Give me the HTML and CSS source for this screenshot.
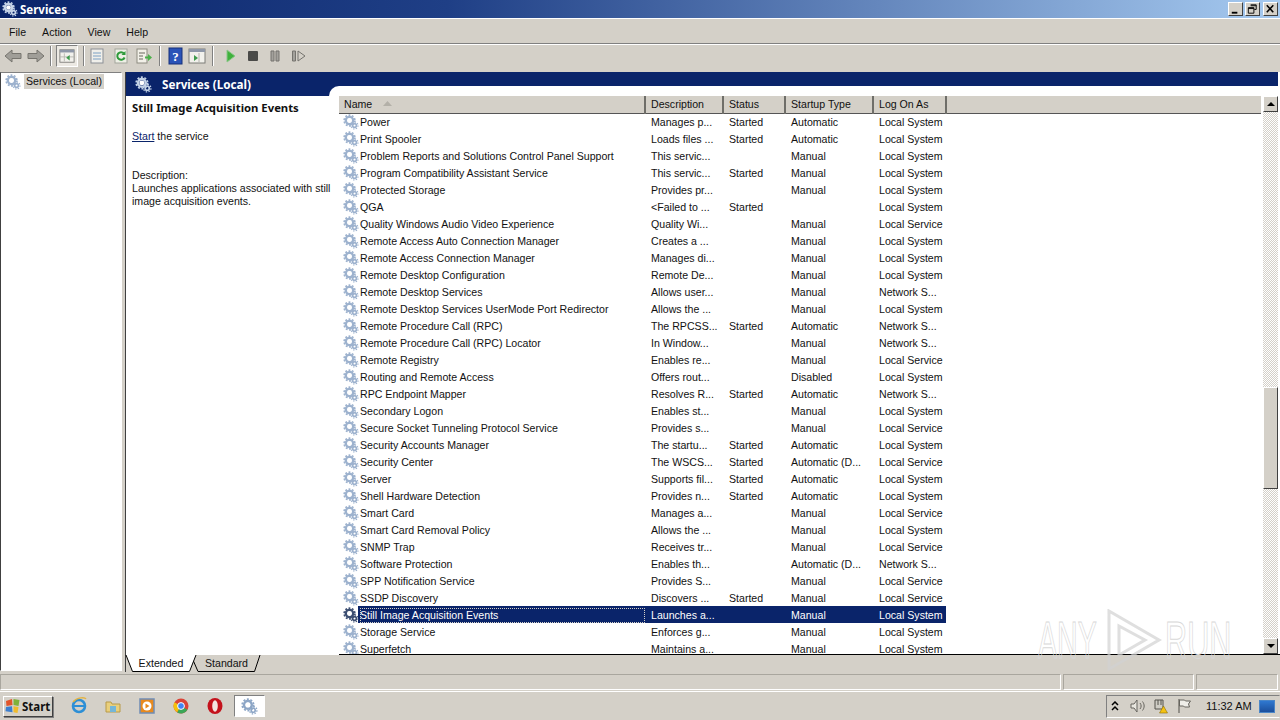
FILE: index.html
```html
<!DOCTYPE html>
<html lang="en">
<head>
<meta charset="utf-8">
<title>Services</title>
<link rel="stylesheet" href="styles.css">
</head>
<body>
<svg class="defs" width="0" height="0" aria-hidden="true">
  <defs>
    <symbol id="gear" viewBox="0 0 16 16">
      <g fill="none" stroke-linecap="butt">
        <circle cx="6.500" cy="6.500" r="3.600" stroke="currentColor" stroke-width="2.400"/>
        <circle cx="6.500" cy="6.500" r="5.400" stroke="currentColor" stroke-width="1.600" stroke-dasharray="1.900 1.500"/>
        <circle cx="11.500" cy="11.500" r="1.900" stroke="currentColor" stroke-width="1.600"/>
        <circle cx="11.500" cy="11.500" r="3.500" stroke="currentColor" stroke-width="1.200" stroke-dasharray="1.400 1.300"/>
      </g>
      <circle cx="6.500" cy="6.500" r="2.300" fill="#fff"/>
    </symbol>
  </defs>
</svg>
<div class="window">
  <header class="titlebar">
    <svg class="title-icon"><use href="#gear"/></svg>
    <span class="title-text">Services</span>
    <div class="win-buttons">
      <span class="win-btn"><svg viewBox="0 0 14 12"><rect x="3" y="9" width="6" height="2" fill="#000"/></svg></span>
      <span class="win-btn"><svg viewBox="0 0 14 12"><path d="M5 1.500h6v5h-2M2.500 4.500h6v6h-6z M5 2.500h6M2.500 5.500h6" fill="none" stroke="#000"/></svg></span>
      <span class="win-btn win-close"><svg viewBox="0 0 14 12"><path d="M3 2l7 7.500M10 2l-7 7.500" fill="none" stroke="#000" stroke-width="1.700"/></svg></span>
    </div>
  </header>
  <nav class="menubar">
    <span>File</span><span>Action</span><span>View</span><span>Help</span>
  </nav>
  <div class="toolbar">
    <svg class="tool tool-arrow" viewBox="0 0 18 16"><path d="M1 8l7-6v3.500h9v5H8V14z" fill="#a09e98" stroke="#77756f"/></svg>
    <svg class="tool tool-arrow" viewBox="0 0 18 16"><path d="M17 8l-7-6v3.500H1v5h9V14z" fill="#a09e98" stroke="#77756f"/></svg>
    <i class="tool-sep"></i>
    <span class="tool-pressed"><svg viewBox="0 0 18 16"><rect x="1" y="1" width="16" height="14" fill="#f2f1ec" stroke="#7d7c78"/><rect x="1" y="1" width="16" height="3" fill="#8e97a8"/><path d="M6 5v9M1 9h16" stroke="#b5b4ae"/><path d="M12 7v6l-4-3z" fill="#3e9a4c"/></svg></span>
    <i class="tool-sep"></i>
    <svg class="tool tool-doc" viewBox="0 0 16 16"><rect x="2" y="1" width="12" height="14" fill="#f0efea" stroke="#8b8f96"/><path d="M4 5h8M4 8h8M4 11h8" stroke="#7aa0c4"/></svg>
    <svg class="tool tool-refresh" viewBox="0 0 16 16"><rect x="2" y="1" width="12" height="14" fill="#eef0e6" stroke="#a2a59b"/><path d="M11 5.500a3.800 3.800 0 1 0 .6 4" fill="none" stroke="#2e9a3a" stroke-width="2"/><path d="M12.500 3v4h-4z" fill="#2e9a3a"/></svg>
    <svg class="tool tool-export" viewBox="0 0 16 16"><rect x="1" y="1" width="10" height="14" fill="#f2f0e8" stroke="#8d8b80"/><path d="M3 5h6M3 8h4M3 11h4" stroke="#68665e"/><path d="M9 8.500h3V6l4 3.500-4 3.500v-2.500H9z" fill="#4bb04a"/></svg>
    <i class="tool-sep"></i>
    <svg class="tool tool-help" viewBox="0 0 15 18"><rect width="13" height="16" x="1" y="1" fill="#2a53b8" stroke="#16307a"/><text x="7.500" y="13.500" class="help-mark">?</text></svg>
    <svg class="tool tool-props" viewBox="0 0 18 16"><rect x="1" y="1" width="16" height="14" fill="#f2f1ec" stroke="#7d7c78"/><rect x="1" y="1" width="16" height="3" fill="#8e97a8"/><path d="M11 5v9" stroke="#b5b4ae"/><path d="M6 7v6l4-3z" fill="#3e9a4c"/></svg>
    <i class="tool-sep"></i>
    <svg class="tool tool-play" viewBox="0 0 14 16"><path d="M3 2l8 6-8 6z" fill="#3fb13c" stroke="#8ac788"/></svg>
    <svg class="tool tool-stop" viewBox="0 0 14 16"><rect x="2" y="3" width="10" height="10" rx="1" fill="#4a4a48"/></svg>
    <svg class="tool tool-pause" viewBox="0 0 14 16"><path d="M3 3h3v10H3zM8 3h3v10H8z" fill="#a3a19c" stroke="#75736e"/></svg>
    <svg class="tool tool-resume" viewBox="0 0 16 16"><path d="M1.500 3h3v10h-3z" fill="#a3a19c" stroke="#75736e"/><path d="M7 3l7 5-7 5z" fill="#d4d0c8" stroke="#75736e"/></svg>
  </div>
  <main class="workspace">
    <aside class="tree">
      <div class="tree-item">
        <svg class="row-icon"><use href="#gear"/></svg>
        <span class="tree-label">Services (Local)</span>
      </div>
    </aside>
    <section class="pane">
      <div class="pane-band">
        <div class="pane-head">
          <svg class="head-icon"><use href="#gear"/></svg>
          <span>Services (Local)</span>
        </div>
        <div class="pane-head-rest"><i></i></div>
      </div>
      <div class="pane-body">
        <div class="details">
          <h1>Still Image Acquisition Events</h1>
          <p class="start-line"><a>Start</a> the service</p>
          <p class="desc">Description:<br>Launches applications associated with still image acquisition events.</p>
        </div>
        <div class="list">
          <div class="list-main">
            <table class="grid">
              <colgroup><col class="c-name"><col class="c-desc"><col class="c-status"><col class="c-type"><col class="c-logon"><col></colgroup>
              <thead>
                <tr>
                  <th class="th-name">Name<svg class="sort" viewBox="0 0 9 5"><path d="M4.500 0L9 5H0z" fill="#b3b0a8"/></svg></th>
                  <th>Description</th><th>Status</th><th>Startup Type</th><th>Log On As</th><th class="th-fill"></th>
                </tr>
              </thead>
              <tbody>
                <tr><td><svg class="row-icon"><use href="#gear"/></svg>Power</td><td>Manages p...</td><td>Started</td><td>Automatic</td><td>Local System</td><td></td></tr>
                <tr><td><svg class="row-icon"><use href="#gear"/></svg>Print Spooler</td><td>Loads files ...</td><td>Started</td><td>Automatic</td><td>Local System</td><td></td></tr>
                <tr><td><svg class="row-icon"><use href="#gear"/></svg>Problem Reports and Solutions Control Panel Support</td><td>This servic...</td><td></td><td>Manual</td><td>Local System</td><td></td></tr>
                <tr><td><svg class="row-icon"><use href="#gear"/></svg>Program Compatibility Assistant Service</td><td>This servic...</td><td>Started</td><td>Manual</td><td>Local System</td><td></td></tr>
                <tr><td><svg class="row-icon"><use href="#gear"/></svg>Protected Storage</td><td>Provides pr...</td><td></td><td>Manual</td><td>Local System</td><td></td></tr>
                <tr><td><svg class="row-icon"><use href="#gear"/></svg>QGA</td><td>&lt;Failed to ...</td><td>Started</td><td></td><td>Local System</td><td></td></tr>
                <tr><td><svg class="row-icon"><use href="#gear"/></svg>Quality Windows Audio Video Experience</td><td>Quality Wi...</td><td></td><td>Manual</td><td>Local Service</td><td></td></tr>
                <tr><td><svg class="row-icon"><use href="#gear"/></svg>Remote Access Auto Connection Manager</td><td>Creates a ...</td><td></td><td>Manual</td><td>Local System</td><td></td></tr>
                <tr><td><svg class="row-icon"><use href="#gear"/></svg>Remote Access Connection Manager</td><td>Manages di...</td><td></td><td>Manual</td><td>Local System</td><td></td></tr>
                <tr><td><svg class="row-icon"><use href="#gear"/></svg>Remote Desktop Configuration</td><td>Remote De...</td><td></td><td>Manual</td><td>Local System</td><td></td></tr>
                <tr><td><svg class="row-icon"><use href="#gear"/></svg>Remote Desktop Services</td><td>Allows user...</td><td></td><td>Manual</td><td>Network S...</td><td></td></tr>
                <tr><td><svg class="row-icon"><use href="#gear"/></svg>Remote Desktop Services UserMode Port Redirector</td><td>Allows the ...</td><td></td><td>Manual</td><td>Local System</td><td></td></tr>
                <tr><td><svg class="row-icon"><use href="#gear"/></svg>Remote Procedure Call (RPC)</td><td>The RPCSS...</td><td>Started</td><td>Automatic</td><td>Network S...</td><td></td></tr>
                <tr><td><svg class="row-icon"><use href="#gear"/></svg>Remote Procedure Call (RPC) Locator</td><td>In Window...</td><td></td><td>Manual</td><td>Network S...</td><td></td></tr>
                <tr><td><svg class="row-icon"><use href="#gear"/></svg>Remote Registry</td><td>Enables re...</td><td></td><td>Manual</td><td>Local Service</td><td></td></tr>
                <tr><td><svg class="row-icon"><use href="#gear"/></svg>Routing and Remote Access</td><td>Offers rout...</td><td></td><td>Disabled</td><td>Local System</td><td></td></tr>
                <tr><td><svg class="row-icon"><use href="#gear"/></svg>RPC Endpoint Mapper</td><td>Resolves R...</td><td>Started</td><td>Automatic</td><td>Network S...</td><td></td></tr>
                <tr><td><svg class="row-icon"><use href="#gear"/></svg>Secondary Logon</td><td>Enables st...</td><td></td><td>Manual</td><td>Local System</td><td></td></tr>
                <tr><td><svg class="row-icon"><use href="#gear"/></svg>Secure Socket Tunneling Protocol Service</td><td>Provides s...</td><td></td><td>Manual</td><td>Local Service</td><td></td></tr>
                <tr><td><svg class="row-icon"><use href="#gear"/></svg>Security Accounts Manager</td><td>The startu...</td><td>Started</td><td>Automatic</td><td>Local System</td><td></td></tr>
                <tr><td><svg class="row-icon"><use href="#gear"/></svg>Security Center</td><td>The WSCS...</td><td>Started</td><td>Automatic (D...</td><td>Local Service</td><td></td></tr>
                <tr><td><svg class="row-icon"><use href="#gear"/></svg>Server</td><td>Supports fil...</td><td>Started</td><td>Automatic</td><td>Local System</td><td></td></tr>
                <tr><td><svg class="row-icon"><use href="#gear"/></svg>Shell Hardware Detection</td><td>Provides n...</td><td>Started</td><td>Automatic</td><td>Local System</td><td></td></tr>
                <tr><td><svg class="row-icon"><use href="#gear"/></svg>Smart Card</td><td>Manages a...</td><td></td><td>Manual</td><td>Local Service</td><td></td></tr>
                <tr><td><svg class="row-icon"><use href="#gear"/></svg>Smart Card Removal Policy</td><td>Allows the ...</td><td></td><td>Manual</td><td>Local System</td><td></td></tr>
                <tr><td><svg class="row-icon"><use href="#gear"/></svg>SNMP Trap</td><td>Receives tr...</td><td></td><td>Manual</td><td>Local Service</td><td></td></tr>
                <tr><td><svg class="row-icon"><use href="#gear"/></svg>Software Protection</td><td>Enables th...</td><td></td><td>Automatic (D...</td><td>Network S...</td><td></td></tr>
                <tr><td><svg class="row-icon"><use href="#gear"/></svg>SPP Notification Service</td><td>Provides S...</td><td></td><td>Manual</td><td>Local Service</td><td></td></tr>
                <tr><td><svg class="row-icon"><use href="#gear"/></svg>SSDP Discovery</td><td>Discovers ...</td><td>Started</td><td>Manual</td><td>Local Service</td><td></td></tr>
                <tr class="selected"><td><svg class="row-icon"><use href="#gear"/></svg><span class="sel-name">Still Image Acquisition Events</span></td><td>Launches a...</td><td></td><td>Manual</td><td>Local System</td><td class="no-sel"></td></tr>
                <tr><td><svg class="row-icon"><use href="#gear"/></svg>Storage Service</td><td>Enforces g...</td><td></td><td>Manual</td><td>Local System</td><td></td></tr>
                <tr><td><svg class="row-icon"><use href="#gear"/></svg>Superfetch</td><td>Maintains a...</td><td></td><td>Manual</td><td>Local System</td><td></td></tr>
              </tbody>
            </table>
          </div>
          <div class="scrollbar">
            <span class="sb-btn"><i class="arrow-up"></i></span>
            <div class="sb-track"><span class="sb-thumb"></span></div>
            <span class="sb-btn"><i class="arrow-down"></i></span>
          </div>
        </div>
      </div>
      <div class="tabs">
        <span class="tab tab-on"><svg viewBox="0 0 70 17" preserveAspectRatio="none"><path d="M0 0L6.500 16.500H63.500L70 0" fill="#fff" stroke="#000"/></svg><b>Extended</b></span>
        <span class="tab tab-off"><svg viewBox="0 0 67 17" preserveAspectRatio="none"><path d="M0 5L5 16.500H61.500L67 0" fill="#d4d0c8" stroke="#000"/></svg><b>Standard</b></span>
      </div>
    </section>
  </main>
  <div class="statusbar"><span class="st-a"></span><span class="st-b"></span><span class="st-c"></span></div>
  <footer class="taskbar">
    <span class="start">
      <svg viewBox="0 0 16 16"><path d="M1 3l6-2 .5 6-6 1z" fill="#e2552b"/><path d="M8.500 1l6 1-1 6-5-1z" fill="#7fb13a"/><path d="M1 9l6-.7.500 6-7-1z" fill="#3c7fd0"/><path d="M8.500 8.300l5 .7-1 6-4-.7z" fill="#f0bb2c"/></svg>
      Start
    </span>
    <div class="quick">
      <svg viewBox="0 0 18 18"><circle cx="9" cy="9" r="6" fill="none" stroke="#2d8fd6" stroke-width="2.600"/><path d="M4 9h10" stroke="#2d8fd6" stroke-width="2"/><path d="M3 5c4-5 12-5 13-3" fill="none" stroke="#e3b341" stroke-width="1.400"/></svg>
      <svg viewBox="0 0 18 18"><path d="M2 5h5l1 2h8v8H2z" fill="#e9cf7c" stroke="#b89a48"/><rect x="6" y="9" width="6" height="6" fill="#74b6d8"/></svg>
      <svg viewBox="0 0 18 18"><rect x="2" y="2" width="14" height="14" fill="#e88a1e" stroke="#6f8cb5" stroke-width="1.500"/><circle cx="9" cy="9" r="4.500" fill="#fff"/><path d="M7.500 6.500l4 2.500-4 2.500z" fill="#e88a1e"/></svg>
      <svg viewBox="0 0 18 18"><circle cx="9" cy="9" r="7.500" fill="#db4437"/><path d="M9 9l6.500 3.700A7.500 7.500 0 0 1 5 15.300z" fill="#3aa757"/><path d="M9 9L5 15.300A7.500 7.500 0 0 1 2.500 5.200z" fill="#f4c20d"/><circle cx="9" cy="9" r="3.400" fill="#4285f4" stroke="#fff"/></svg>
      <svg viewBox="0 0 18 18"><ellipse cx="9" cy="9" rx="7.500" ry="8" fill="#c4121c"/><ellipse cx="9" cy="9" rx="2.800" ry="5.800" fill="#f3e4e0"/></svg>
    </div>
    <span class="task-active"><svg><use href="#gear"/></svg></span>
    <div class="tray">
      <svg class="tr-chev" viewBox="0 0 8 10"><path d="M1 4l3-3 3 3M1 9l3-3 3 3" fill="none" stroke="#000" stroke-width="1.500"/></svg>
      <svg class="tr-ico" viewBox="0 0 16 16"><path d="M1 6h3l3-4v12l-3-4H1z" fill="#e8e6df" stroke="#66645e"/><path d="M10 5c1.500 2 1.500 4 0 6M12.500 3.500c2.200 3 2.200 6 0 9" fill="none" stroke="#66645e"/></svg>
      <svg class="tr-ico" viewBox="0 0 16 16"><path d="M2 2h8v9H2z" fill="#cfcdc5" stroke="#55534d"/><path d="M5 2v5M8 2v5" stroke="#55534d"/><path d="M10.500 8l4 7h-8z" fill="#f5c211" stroke="#8a6d0a" stroke-width=".6"/></svg>
      <svg class="tr-ico" viewBox="0 0 16 16"><path d="M3 1v14" stroke="#66645e" stroke-width="1.200"/><path d="M3.500 2h5l1 1h5l-2 3 1 3h-5l-1-1h-4z" fill="#efeee9" stroke="#66645e"/></svg>
      <span class="clock">11:32 AM</span>
      <span class="show-desktop"></span>
    </div>
  </footer>
</div>
<div class="watermark" aria-hidden="true">
  <span class="wm-any">ANY</span>
  <svg viewBox="0 0 58 62"><path d="M3 2l50 29L3 60zM13 17l26 14-26 15z" fill="none" stroke="#d2d2d2" stroke-width="3"/></svg>
  <span class="wm-run">RUN</span>
</div>
</body>
</html>
```
FILE: styles.css
```css
* { box-sizing: border-box; }
html, body { margin: 0; padding: 0; height: 720px; overflow: hidden; }
body { position: relative; background: #d4d0c8; font-family: "Liberation Sans", Arial, sans-serif; font-size: 10.600px; color: #111; }
.defs { position: absolute; }
.window { display: flex; flex-direction: column; width: 1280px; height: 720px; }

.titlebar { flex: 0 0 18px; display: flex; align-items: center; padding: 0 2px 0 2px; background: linear-gradient(90deg, #0a246a 0%, #1f3f86 35%, #a6caf0 100%); color: #fff; }
.title-icon { width: 16px; height: 16px; color: #c6d4e8; margin-right: 2px; }
.title-text { font-family: "Noto Sans", sans-serif; font-weight: 700; font-size: 11.500px; flex: 1; }
.win-buttons { display: flex; gap: 2px; }
.win-btn { width: 15px; height: 14px; background: #d4d0c8; border: 1px solid; border-color: #fff #404040 #404040 #fff; display: flex; }
.win-btn svg { width: 100%; height: 100%; }
.win-close { margin-left: 1px; }

.menubar { flex: 0 0 26px; display: flex; align-items: center; gap: 16px; padding: 1px 0 0 9px; border-top: 1px solid #fff; border-bottom: 1px solid #808080; }

.toolbar { flex: 0 0 26px; display: flex; align-items: center; padding: 0 0 3px 4px; border-top: 1px solid #fff; }
.tool { flex: none; width: 16px; height: 16px; margin-right: 7px; }
.tool-arrow { width: 18px; margin-right: 5px; }
.tool-sep { flex: none; width: 2px; height: 20px; margin: 0 4px 0 0; border-left: 1px solid #808080; border-right: 1px solid #fff; }
.tool-pressed { flex: none; width: 22px; height: 22px; margin-right: 5px; padding: 2px; background: #ece9e3; border: 1px solid; border-color: #808080 #fff #fff #808080; display: flex; }
.tool-pressed svg { width: 100%; height: 100%; }
.help-mark { fill: #fff; font-size: 13px; font-weight: 700; text-anchor: middle; font-family: "Liberation Serif", serif; }
.tool-doc { margin-right: 8px; }
.tool-help { margin-left: 3px; margin-right: 5px; width: 15px; height: 18px; }
.tool-props { width: 18px; margin-right: 6px; }
.tool-play { margin-left: 6px; margin-right: 8px; width: 14px; }
.tool-stop { margin-right: 8px; width: 14px; }
.tool-pause { margin-right: 9px; width: 14px; }

.workspace { flex: 0 0 602px; display: flex; padding-top: 2px; }
.tree { flex: 0 0 122px; background: #fff; border: 1px solid; border-color: #808080 #fff #fff #404040; margin-bottom: 1px; padding: 1px 0 0 4px; }
.tree-item { display: flex; align-items: center; gap: 3px; height: 15px; }
.tree-label { background: #d4d0c8; padding: 0 2px; height: 15px; line-height: 15px; }
.row-icon { width: 16px; height: 16px; color: #9db2ce; flex: none; }

.pane { flex: 1; min-width: 0; margin-left: 3px; border-left: 1px solid #404040; display: flex; flex-direction: column; }
.pane-band { flex: 0 0 24px; display: flex; background: #fff; }
.pane-head { flex: 0 0 203px; height: 24px; background: #0a246a; color: #fff; display: flex; align-items: center; font-family: "Noto Sans", sans-serif; font-weight: 700; font-size: 11.700px; padding-left: 9px; gap: 10px; }
.head-icon { width: 17px; height: 17px; color: #c3d2e6; }
.pane-head-rest { flex: 1; height: 14px; background: #0a246a; margin-right: 2px; position: relative; }
.pane-head-rest i { position: absolute; left: 0; top: 13px; width: 11px; height: 11px; background: #0a246a; }
.pane-head-rest::after { content: ""; position: absolute; left: 0; top: 14px; width: 11px; height: 10px; border-radius: 11px 0 0 0; background: #fff; }
.pane-body { flex: 1; min-height: 0; display: flex; background: #fff; }

.details { flex: 0 0 213px; padding: 5px 4px 0 6px; line-height: 13px; }
.details h1 { margin: 0; font-family: "Noto Sans", sans-serif; font-size: 11.300px; font-weight: 700; line-height: 13px; }
.start-line { margin: 16px 0 0; }
.start-line a { color: #0a246a; text-decoration: underline; }
.desc { margin: 26px 0 0; }

.list { flex: 1; min-width: 0; display: flex; height: 559px; border-bottom: 1px solid #000; }
.list-main { flex: 1; min-width: 0; overflow: hidden; }
.grid { border-collapse: collapse; table-layout: fixed; width: 922px; line-height: 16px; }
.c-name { width: 306px; } .c-desc { width: 78px; } .c-status { width: 62px; } .c-type { width: 88px; } .c-logon { width: 73px; }
.grid th { height: 17px; padding: 0 0 0 5px; background: #d4d0c8; font-weight: 400; text-align: left; border-right: 2px solid #6f6e69; border-bottom: 1px solid #555; white-space: nowrap; }
.grid .th-fill { border-right: 0; }
.th-name { padding-left: 5px !important; }
.sort { width: 9px; height: 5px; margin-left: 11px; vertical-align: 2px; }
.grid td { height: 17px; padding: 0 0 0 6px; white-space: nowrap; overflow: hidden; vertical-align: middle; }
.grid td:first-child { padding-left: 4px; overflow: visible; }
.grid .row-icon { vertical-align: top; margin-right: 1px; }
.selected td { background: #0a246a; color: #fff; }
.selected td:first-child { background: linear-gradient(90deg, transparent 19px, #0a246a 19px); }
.selected .no-sel { background: none; }
.selected .row-icon { color: #3d4f72; }
.sel-name { display: inline-block; width: 285px; line-height: 15px; outline: 1px dotted #d4d0c8; outline-offset: -1px; }

.scrollbar { flex: 0 0 17px; display: flex; flex-direction: column; padding-right: 2px; }
.sb-btn { flex: 0 0 16px; background: #d4d0c8; border: 1px solid; border-color: #fff #404040 #404040 #fff; display: flex; align-items: center; justify-content: center; }
.arrow-up { border: 4px solid transparent; border-top: 0; border-bottom: 4px solid #000; width: 0; }
.arrow-down { border: 4px solid transparent; border-bottom: 0; border-top: 4px solid #000; width: 0; }
.sb-track { flex: 1; min-height: 0; background: repeating-conic-gradient(#fff 0 25%, #d4d0c8 0 50%) 0 0 / 2px 2px; padding-top: 275px; }
.sb-thumb { display: block; height: 102px; background: #d4d0c8; border: 1px solid; border-color: #fff #404040 #404040 #fff; }

.tabs { flex: 0 0 17px; display: flex; }
.tab { position: relative; height: 17px; line-height: 17px; text-align: center; }
.tab svg { position: absolute; left: 0; top: 0; width: 100%; height: 100%; overflow: visible; }
.tab b { position: relative; font-weight: 400; }
.tab-on { width: 70px; z-index: 1; }
.tab-off { width: 67px; margin-left: -3px; }

.statusbar { flex: 0 0 20px; display: flex; padding: 2px 2px 1px 0; border-bottom: 1px solid #fff; }
.statusbar span { border: 1px solid; border-color: #a9a69e #fff #fff #a9a69e; }
.st-a { flex: 0 0 1061px; } .st-b { flex: 0 0 131px; margin-left: 2px; } .st-c { flex: 1; margin-left: 2px; }

.taskbar { flex: 1; display: flex; align-items: center; padding-left: 3px; }
.start { width: 50px; height: 21px; display: flex; align-items: center; gap: 1px; padding-left: 1px; font-family: "Noto Sans", sans-serif; font-weight: 700; font-size: 11.500px; background: #d4d0c8; border: 1px solid; border-color: #fff #404040 #404040 #fff; box-shadow: 1px 1px 0 #808080; }
.start svg { width: 16px; height: 16px; }
.quick { display: flex; gap: 16px; margin-left: 17px; }
.quick svg { width: 18px; height: 18px; }
.task-active { width: 31px; height: 22px; margin-left: 10px; background: #fff; border: 1px solid; border-color: #808080 #fff #fff #808080; display: flex; align-items: center; justify-content: center; color: #8da6c6; }
.task-active svg { width: 17px; height: 17px; }
.tray { margin-left: auto; width: 174px; height: 23px; display: flex; align-items: center; border: 1px solid; border-color: #808080 transparent #fff #808080; padding-left: 4px; }
.tr-chev { width: 8px; height: 10px; margin-right: 11px; }
.tr-ico { width: 16px; height: 16px; margin-right: 7px; }
.clock { margin-left: 7px; width: 53px; font-size: 11px; }
.show-desktop { width: 16px; height: 13px; background: linear-gradient(#2f78d0, #1c4f9c); border: 1px solid #4a86c8; }

.watermark { position: absolute; left: 1038px; top: 609px; height: 62px; display: flex; align-items: center; color: transparent; -webkit-text-stroke: 1px #d8d8d8; font-family: "Liberation Sans", sans-serif; font-size: 52px; line-height: 62px; pointer-events: none; }
.watermark span { display: block; transform-origin: left center; }
.wm-any { width: 68px; transform: scaleX(.55); }
.watermark svg { width: 58px; height: 62px; opacity: .7; }
.wm-run { width: 68px; margin-left: 1px; transform: scaleX(.59); }
```
